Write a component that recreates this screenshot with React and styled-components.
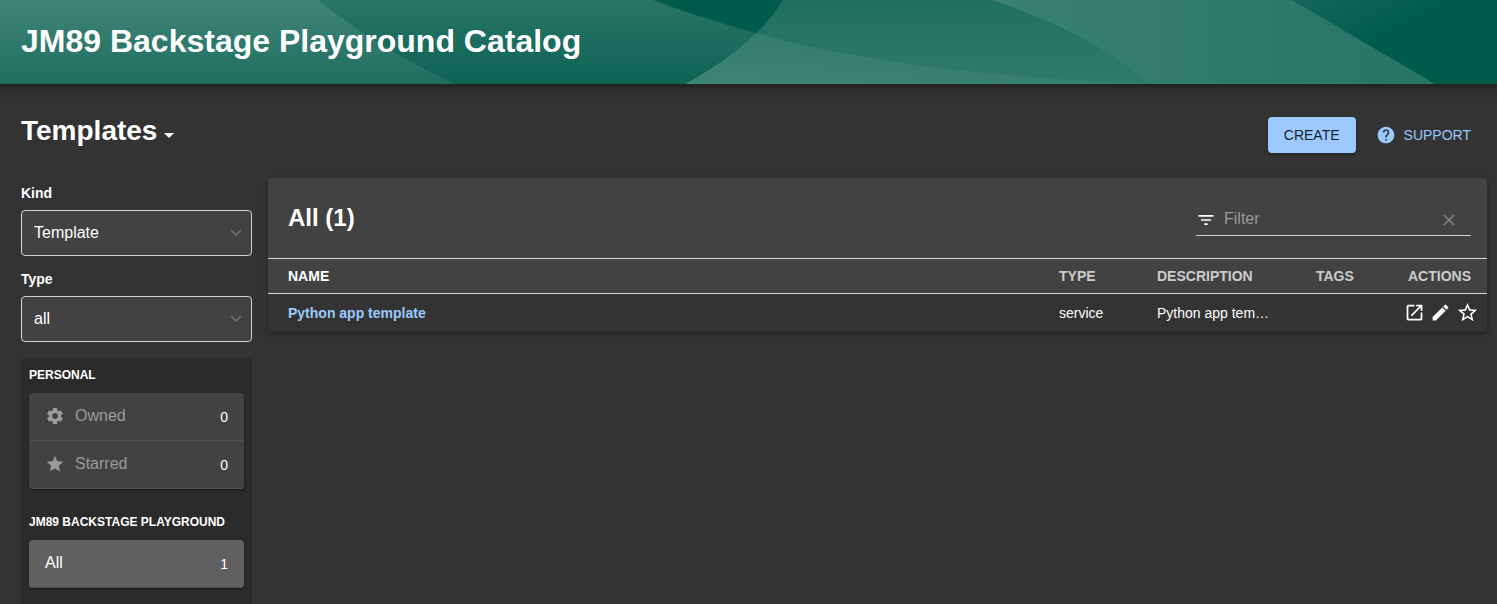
import React from "react";
import styled, { createGlobalStyle } from "styled-components";
import {
  MdSettings,
  MdStar,
  MdHelp,
  MdFilterList,
  MdClear,
  MdOpenInNew,
  MdEdit,
  MdStarBorder,
} from "react-icons/md";

const GlobalStyle = createGlobalStyle`
  *, *::before, *::after { box-sizing: border-box; }
  body {
    margin: 0;
    background: #333;
    color: #fff;
    font-family: "Liberation Sans", Arial, sans-serif;
    font-size: 14px;
    line-height: 20px;
    overflow: hidden;
  }
  button, input, select { font-family: inherit; }
  h1, h2, h3, p { margin: 0; }
`;

const Header = styled.header`
  display: grid;
  align-items: center;
  height: 84px;
  background: #005b4b;
  box-shadow: 0 0 8px 3px rgba(20, 20, 20, 0.7);
  > * { grid-area: 1 / 1; }
`;

const Wave = styled.svg`
  display: block;
  width: 100%;
  height: 84px;
`;

const HeaderTitle = styled.h1`
  padding: 0 21px 2px;
  font-size: 32px;
  line-height: 40px;
  font-weight: 700;
  z-index: 1;
`;

const Page = styled.main`
  padding: 24px 10px 0 21px;
`;

const ContentHeader = styled.div`
  display: flex;
  justify-content: space-between;
  height: 70px;
`;

const KindButton = styled.button`
  display: flex;
  align-items: center;
  height: 46px;
  padding: 0;
  border: 0;
  background: none;
  color: #fff;
  font-size: 28px;
  line-height: 32px;
  font-weight: 700;
`;

const Caret = styled.svg`
  width: 10px;
  height: 5px;
  margin: 8px 0 0 7px;
`;

const HeaderActions = styled.div`
  display: flex;
  align-items: center;
  height: 36px;
  margin-top: 9px;
  gap: 16px;
  padding-right: 16px;
`;

const CreateButton = styled.button`
  height: 36px;
  padding: 0 16px;
  border: 0;
  border-radius: 4px;
  background: #9cc9ff;
  color: rgba(0, 0, 0, 0.87);
  font-size: 14px;
  box-shadow: 0 2px 3px rgba(0, 0, 0, 0.3);
`;

const SupportButton = styled.button`
  display: flex;
  align-items: center;
  gap: 8px;
  padding: 0 0 0 4px;
  border: 0;
  background: none;
  color: #9cc9ff;
  font-size: 14px;
`;

const Columns = styled.div`
  display: grid;
  grid-template-columns: 231px minmax(0, 1fr);
  gap: 16px;
  align-items: start;
`;

const Sidebar = styled.aside`
  display: flex;
  flex-direction: column;
  padding-top: 4px;
`;

const Field = styled.div`
  display: flex;
  flex-direction: column;
  height: 86px;
`;

const FieldLabel = styled.label`
  height: 28px;
  line-height: 22px;
  font-weight: 700;
`;

const SelectBox = styled.div`
  display: grid;
  align-items: center;
  > * { grid-area: 1 / 1; }
`;

const Select = styled.select`
  appearance: none;
  width: 100%;
  height: 46px;
  padding: 0 30px 2px 12px;
  border: 1px solid #ced4da;
  border-radius: 4px;
  background: #424242;
  color: #fff;
  font-size: 16px;
`;

const Chevron = styled.svg`
  justify-self: end;
  width: 12px;
  height: 8px;
  margin-right: 10px;
  pointer-events: none;
`;

const FilterPanel = styled.section`
  margin-top: 4px;
  padding: 8px;
  border-radius: 4px;
  background: #2b2b2b;
`;

const GroupTitle = styled.h3`
  height: 27px;
  font-size: 12px;
  line-height: 18px;
  font-weight: 700;
`;

const Group = styled.div`
  margin-bottom: 24px;
  border-radius: 4px;
  overflow: hidden;
  box-shadow: 0 1px 2px rgba(0, 0, 0, 0.5);
`;

const GroupItem = styled.button`
  display: flex;
  align-items: center;
  width: 100%;
  height: 48px;
  padding: 0 16px;
  border: 0;
  border-bottom: 1px solid #505050;
  background: ${(p) => (p.$selected ? "#606060" : "#424242")};
  color: ${(p) => (p.$selected ? "#fff" : "#9b9b9b")};
  font-size: 16px;
  line-height: 24px;
  text-align: left;
  svg {
    margin-right: 10px;
    margin-bottom: 2px;
  }
`;

const ItemLabel = styled.span`
  flex: 1;
  padding-bottom: 2px;
`;

const ItemCount = styled.span`
  color: #fff;
  font-size: 14px;
`;

const Card = styled.section`
  border-radius: 4px;
  background: #424242;
  overflow: hidden;
  box-shadow: 0 2px 4px rgba(0, 0, 0, 0.35);
`;

const CardHeader = styled.div`
  display: flex;
  align-items: center;
  justify-content: space-between;
  height: 80px;
  padding: 0 16px 0 20px;
`;

const CardTitle = styled.h2`
  font-size: 24px;
  line-height: 32px;
  font-weight: 700;
`;

const Search = styled.label`
  display: flex;
  align-items: center;
  width: 275px;
  height: 34px;
  margin-top: 2px;
  padding-right: 12px;
  border-bottom: 1px solid #d0d0d0;
  svg { margin-top: 2px; }
`;

const SearchInput = styled.input`
  flex: 1;
  min-width: 0;
  padding: 0;
  margin-left: 8px;
  border: 0;
  outline: 0;
  background: none;
  color: #fff;
  font-size: 16px;
  &::placeholder { color: #999; opacity: 1; }
`;

const IconButton = styled.button`
  display: flex;
  padding: 0;
  border: 0;
  background: none;
  color: ${(p) => (p.$muted ? "#808080" : "#fff")};
`;

const Table = styled.table`
  width: 100%;
  table-layout: fixed;
  border-collapse: collapse;
`;

const HeadCell = styled.th`
  height: 35px;
  padding: 0 16px 0 20px;
  border-top: 1px solid #d8d8d8;
  border-bottom: 1px solid #d8d8d8;
  color: ${(p) => (p.$active ? "#fff" : "#ccc")};
  font-weight: 700;
  text-align: ${(p) => p.$align || "left"};
`;

const Cell = styled.td`
  height: 38px;
  padding: 0 20px;
  background: #333;
  overflow: hidden;
  text-overflow: ellipsis;
  white-space: nowrap;
`;

const ActionCell = styled(Cell)`
  padding: 0 8px 0 0;
`;

const Actions = styled.div`
  display: flex;
  align-items: center;
  justify-content: flex-end;
  gap: 5px;
`;

const NameLink = styled.a`
  color: #9cc9ff;
  font-weight: 700;
  text-decoration: none;
`;

function HeaderWave() {
  return (
    <Wave viewBox="0 0 1497 84" preserveAspectRatio="none" aria-hidden="true">
      <defs>
        <linearGradient id="down" x1="0" y1="0" x2="0" y2="1">
          <stop offset="0" stopColor="#fff" stopOpacity=".16" />
          <stop offset="1" stopColor="#fff" stopOpacity=".05" />
        </linearGradient>
        <linearGradient id="left" x1="0" y1="0" x2="0" y2="1">
          <stop offset="0" stopColor="#fff" stopOpacity=".11" />
          <stop offset="1" stopColor="#fff" stopOpacity=".07" />
        </linearGradient>
        <linearGradient id="up" x1="0" y1="0" x2="0" y2="1">
          <stop offset="0" stopColor="#fff" stopOpacity=".12" />
          <stop offset="1" stopColor="#fff" stopOpacity=".19" />
        </linearGradient>
        <linearGradient id="overlap" gradientUnits="userSpaceOnUse" x1="720" y1="0" x2="1148" y2="0">
          <stop offset="0" stopColor="#fff" stopOpacity=".07" />
          <stop offset="1" stopColor="#fff" stopOpacity=".03" />
        </linearGradient>
        <linearGradient id="band" x1="0" y1="0" x2="1" y2="0">
          <stop offset="0" stopColor="#fff" stopOpacity=".23" />
          <stop offset="1" stopColor="#fff" stopOpacity=".15" />
        </linearGradient>
        <linearGradient id="corner" gradientUnits="userSpaceOnUse" x1="1310" y1="0" x2="1340" y2="60">
          <stop offset="0" stopColor="#fff" stopOpacity=".07" />
          <stop offset="1" stopColor="#fff" stopOpacity="0" />
        </linearGradient>
      </defs>
      <path fill="url(#down)" d="M0 0H653Q700 18 756 33Q735 58 685 84H0Z" />
      <path fill="url(#left)" d="M0 0H318Q379 49 455 84H0Z" />
      <path fill="url(#up)" d="M783 0H992Q1096 35 1148 84H685Q756 45 783 0Z" />
      <path fill="url(#overlap)" d="M756 33Q900 74 1148 84H685Q735 58 756 33Z" />
      <path fill="url(#band)" d="M992 0H1292L1435 84H1148Q1096 35 992 0Z" />
      <path fill="url(#corner)" d="M1292 0H1497V84H1435Z" />
    </Wave>
  );
}

function SelectField({ id, label, value }) {
  return (
    <Field>
      <FieldLabel htmlFor={id}>{label}</FieldLabel>
      <SelectBox>
        <Select id={id} defaultValue={value}>
          <option>{value}</option>
        </Select>
        <Chevron viewBox="0 0 12 8" fill="none" stroke="#666" strokeWidth="2">
          <path d="M1 1l5 5 5-5" />
        </Chevron>
      </SelectBox>
    </Field>
  );
}

export default function App() {
  return (
    <>
      <GlobalStyle />
      <Header>
        <HeaderWave />
        <HeaderTitle>JM89 Backstage Playground Catalog</HeaderTitle>
      </Header>
      <Page>
        <ContentHeader>
          <KindButton type="button">
            Templates
            <Caret viewBox="0 0 10 5" fill="#fff">
              <path d="M0 0h10L5 5z" />
            </Caret>
          </KindButton>
          <HeaderActions>
            <CreateButton type="button">CREATE</CreateButton>
            <SupportButton type="button">
              <MdHelp size={20} />
              SUPPORT
            </SupportButton>
          </HeaderActions>
        </ContentHeader>
        <Columns>
          <Sidebar>
            <SelectField id="kind" label="Kind" value="Template" />
            <SelectField id="type" label="Type" value="all" />
            <FilterPanel>
              <GroupTitle>PERSONAL</GroupTitle>
              <Group>
                <GroupItem type="button">
                  <MdSettings size={20} />
                  <ItemLabel>Owned</ItemLabel>
                  <ItemCount>0</ItemCount>
                </GroupItem>
                <GroupItem type="button">
                  <MdStar size={20} />
                  <ItemLabel>Starred</ItemLabel>
                  <ItemCount>0</ItemCount>
                </GroupItem>
              </Group>
              <GroupTitle>JM89 BACKSTAGE PLAYGROUND</GroupTitle>
              <Group>
                <GroupItem type="button" $selected>
                  <ItemLabel>All</ItemLabel>
                  <ItemCount>1</ItemCount>
                </GroupItem>
              </Group>
            </FilterPanel>
          </Sidebar>
          <Card>
            <CardHeader>
              <CardTitle>All (1)</CardTitle>
              <Search>
                <MdFilterList size={20} />
                <SearchInput type="text" placeholder="Filter" aria-label="Filter" />
                <IconButton type="button" aria-label="Clear" $muted>
                  <MdClear size={20} />
                </IconButton>
              </Search>
            </CardHeader>
            <Table>
              <colgroup>
                <col />
                <col style={{ width: 98 }} />
                <col style={{ width: 159 }} />
                <col style={{ width: 91 }} />
                <col style={{ width: 100 }} />
              </colgroup>
              <thead>
                <tr>
                  <HeadCell $active>NAME</HeadCell>
                  <HeadCell>TYPE</HeadCell>
                  <HeadCell>DESCRIPTION</HeadCell>
                  <HeadCell>TAGS</HeadCell>
                  <HeadCell $align="right">ACTIONS</HeadCell>
                </tr>
              </thead>
              <tbody>
                <tr>
                  <Cell><NameLink href="#python">Python app template</NameLink></Cell>
                  <Cell>service</Cell>
                  <Cell>Python app template</Cell>
                  <Cell />
                  <ActionCell>
                    <Actions>
                      <IconButton type="button" aria-label="View"><MdOpenInNew size={21} /></IconButton>
                      <IconButton type="button" aria-label="Edit"><MdEdit size={21} /></IconButton>
                      <IconButton type="button" aria-label="Star"><MdStarBorder size={23} /></IconButton>
                    </Actions>
                  </ActionCell>
                </tr>
              </tbody>
            </Table>
          </Card>
        </Columns>
      </Page>
    </>
  );
}
